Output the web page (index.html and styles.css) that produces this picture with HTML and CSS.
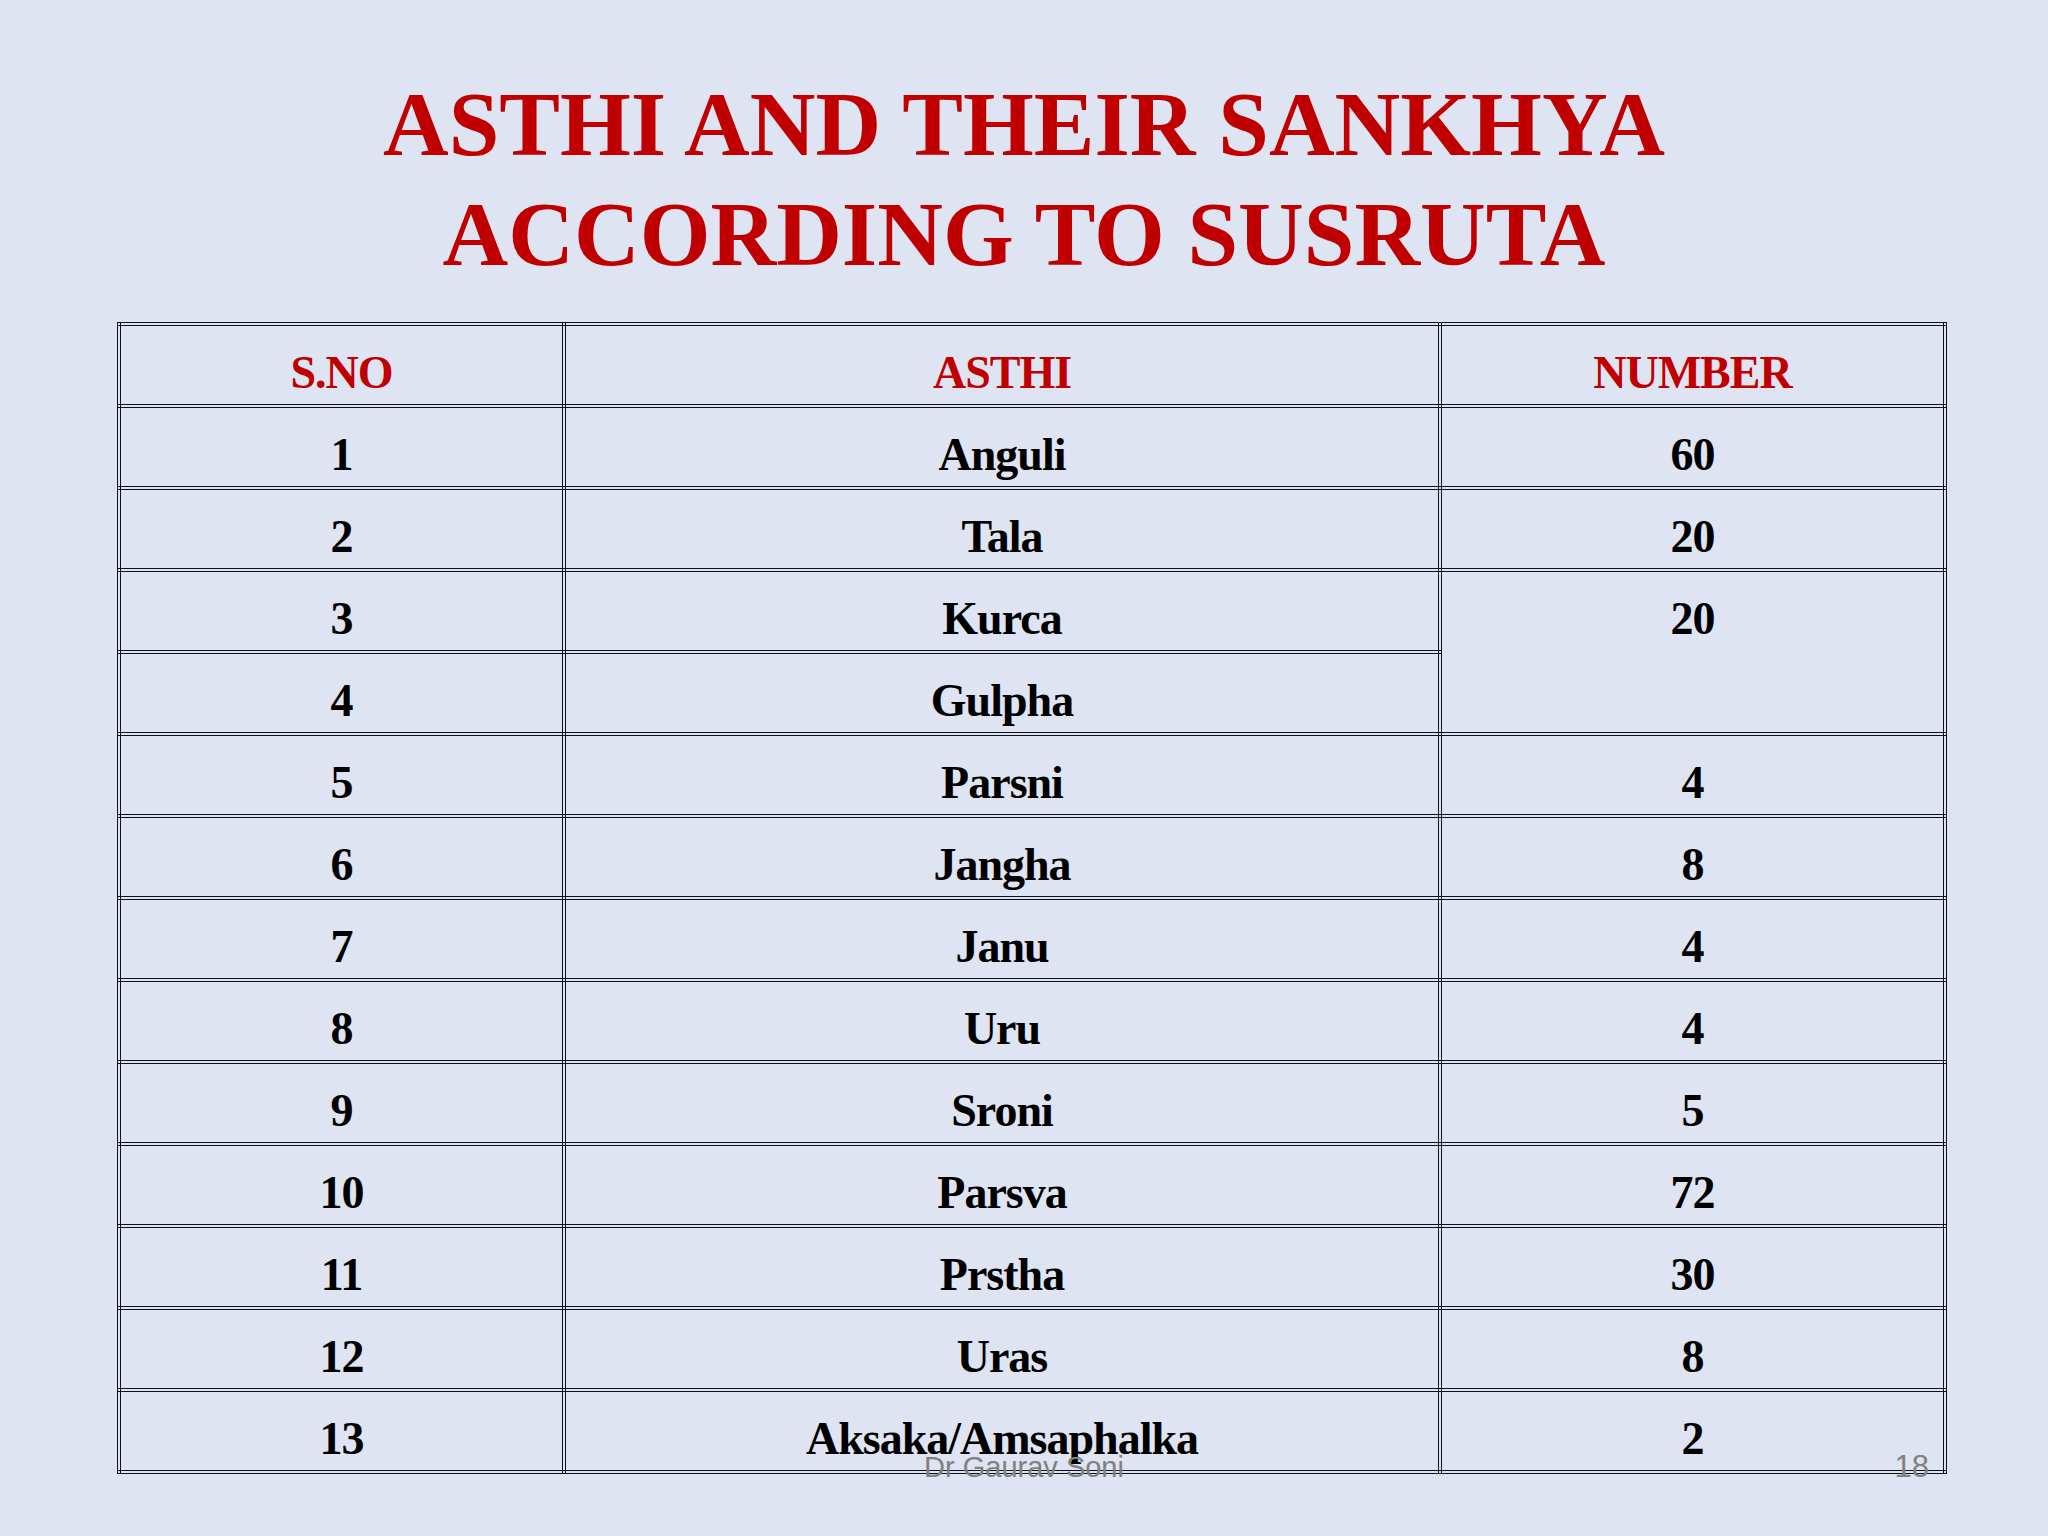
FILE: index.html
```html
<!DOCTYPE html>
<html lang="en">
<head>
<meta charset="utf-8">
<title>Asthi and their Sankhya</title>
<link rel="stylesheet" href="styles.css">
</head>
<body>
<div class="slide">
  <h1 class="title">ASTHI AND THEIR SANKHYA<br>ACCORDING TO SUSRUTA</h1>
  <table class="asthi">
    <colgroup>
      <col class="c1"><col class="c2"><col class="c3">
    </colgroup>
    <thead>
      <tr><th>S.NO</th><th>ASTHI</th><th>NUMBER</th></tr>
    </thead>
    <tbody>
      <tr><td>1</td><td>Anguli</td><td>60</td></tr>
      <tr><td>2</td><td>Tala</td><td>20</td></tr>
      <tr><td>3</td><td>Kurca</td><td rowspan="2">20</td></tr>
      <tr><td>4</td><td>Gulpha</td></tr>
      <tr><td>5</td><td>Parsni</td><td>4</td></tr>
      <tr><td>6</td><td>Jangha</td><td>8</td></tr>
      <tr><td>7</td><td>Janu</td><td>4</td></tr>
      <tr><td>8</td><td>Uru</td><td>4</td></tr>
      <tr><td>9</td><td>Sroni</td><td>5</td></tr>
      <tr><td>10</td><td>Parsva</td><td>72</td></tr>
      <tr><td>11</td><td>Prstha</td><td>30</td></tr>
      <tr><td>12</td><td>Uras</td><td>8</td></tr>
      <tr><td>13</td><td>Aksaka/Amsaphalka</td><td>2</td></tr>
    </tbody>
  </table>
  <div class="footer">Dr Gaurav Soni</div>
  <div class="pagenum">18</div>
</div>
</body>
</html>
```
FILE: styles.css
```css
html, body {
  margin: 0;
  padding: 0;
  background: #dee4f2;
}

.slide {
  position: relative;
  width: 2048px;
  height: 1536px;
  overflow: hidden;
  background: #dee4f2;
  display: flex;
  flex-direction: column;
  align-items: center;
}

.title {
  margin: 70px 0 0 0;
  font-family: "Liberation Serif", "Times New Roman", serif;
  font-weight: bold;
  font-size: 91px;
  line-height: 110px;
  color: #c00000;
  text-align: center;
}

.asthi {
  align-self: flex-start;
  margin: 32px 0 0 117px;
  border-collapse: collapse;
  width: 1826px;
  table-layout: fixed;
  font-family: "Liberation Serif", "Times New Roman", serif;
  font-weight: bold;
  font-size: 46px;
  letter-spacing: -1px;
  color: #000;
}

.c1 { width: 445px; }
.c2 { width: 876px; }
.c3 { width: 505px; }

.asthi th,
.asthi td {
  border: 4px double #0e1118;
  height: 82px;
  box-sizing: border-box;
  padding: 21px 0 0 0;
  vertical-align: top;
  text-align: center;
  line-height: 52px;
  font-weight: bold;
}

.asthi th {
  color: #c00000;
}

.footer {
  position: absolute;
  left: 0;
  right: 0;
  top: 1449px;
  text-align: center;
  font-family: "Liberation Sans", Arial, sans-serif;
  font-size: 29px;
  line-height: 36px;
  color: #808080;
}

.pagenum {
  position: absolute;
  right: 119px;
  top: 1448px;
  font-family: "Liberation Sans", Arial, sans-serif;
  font-size: 31px;
  line-height: 38px;
  color: #808080;
}
```
